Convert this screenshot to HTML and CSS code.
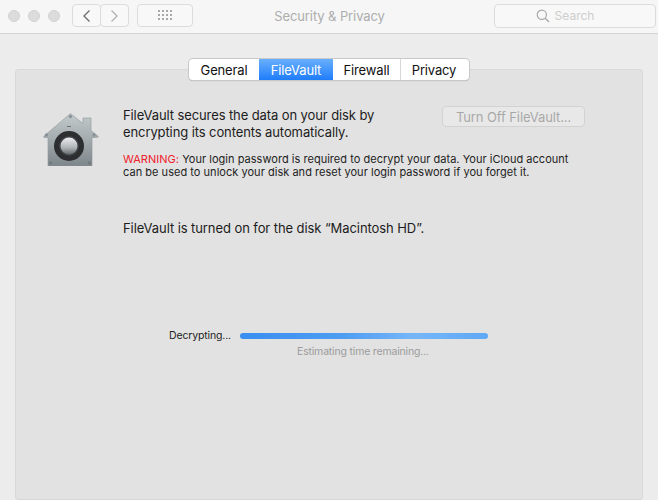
FILE: index.html
```html
<!DOCTYPE html>
<html lang="en">
<head>
<meta charset="utf-8">
<title>Security &amp; Privacy</title>
<link rel="stylesheet" href="styles.css">
</head>
<body>
<header class="toolbar">
  <div class="lights"><span class="light"></span><span class="light"></span><span class="light"></span></div>
  <div class="nav">
    <button class="nav-btn nav-back"><svg width="9" height="14" viewBox="0 0 9 14"><path d="M7.500 1.500 2 7l5.500 5.500" fill="none" stroke="#6f6f6f" stroke-width="1.400"/></svg></button>
    <button class="nav-btn nav-fwd"><svg width="9" height="14" viewBox="0 0 9 14"><path d="M1.500 1.500 7 7l-5.500 5.500" fill="none" stroke="#b4b4b4" stroke-width="1.400"/></svg></button>
  </div>
  <button class="grid-btn"><svg width="15" height="11" viewBox="0 0 15 11" fill="#a8a8a8"><rect x="0" y="0" width="2" height="2"/><rect x="4" y="0" width="2" height="2"/><rect x="8" y="0" width="2" height="2"/><rect x="12" y="0" width="2" height="2"/><rect x="0" y="4" width="2" height="2"/><rect x="4" y="4" width="2" height="2"/><rect x="8" y="4" width="2" height="2"/><rect x="12" y="4" width="2" height="2"/><rect x="0" y="8" width="2" height="2"/><rect x="4" y="8" width="2" height="2"/><rect x="8" y="8" width="2" height="2"/><rect x="12" y="8" width="2" height="2"/></svg></button>
  <div class="title">Security &amp; Privacy</div>
  <div class="search"><svg width="14" height="14" viewBox="0 0 14 14"><circle cx="5.800" cy="5.800" r="4.600" fill="none" stroke="#a9a9a9" stroke-width="1.200"/><path d="M9.200 9.200 13 13" stroke="#a9a9a9" stroke-width="1.400"/></svg><span>Search</span></div>
</header>
<main class="content">
  <nav class="tabs">
    <span class="tab tab-general">General</span>
    <span class="tab tab-active">FileVault</span>
    <span class="tab tab-firewall">Firewall</span>
    <span class="tab tab-sep">Privacy</span>
  </nav>
  <section class="panel">
    <div class="top">
      <svg class="house" width="56" height="53" viewBox="0 0 56 53">
        <defs>
          <linearGradient id="body" x1="0" y1="0" x2="0" y2="1"><stop offset="0" stop-color="#c3cacc"/><stop offset="0.5" stop-color="#a4abae"/><stop offset="1" stop-color="#7c858a"/></linearGradient>
          <linearGradient id="knob" x1="0" y1="0" x2="0" y2="1"><stop offset="0" stop-color="#eceeef"/><stop offset="0.6" stop-color="#aeb3b5"/><stop offset="1" stop-color="#65696b"/></linearGradient>
        </defs>
        <path d="M27.500 0.500 40 10.500V5h8v12.500l7.500 6-1.500 1h-5V53H5V24.500H1l-.500-1z" fill="url(#body)" stroke="#8f979b" stroke-width="0.600"/>
        <circle cx="26" cy="33" r="15" fill="#2c2e2f"/>
        <circle cx="26" cy="33" r="10" fill="#414445"/>
        <circle cx="26" cy="33" r="8.500" fill="url(#knob)"/>
        <rect x="24" y="13" width="4" height="1" fill="#6c7377"/>
        <circle cx="27.500" cy="3.500" r="1.700" fill="#8a9397"/>
        <circle cx="3.500" cy="22" r="1.700" fill="#8a9397"/>
        <circle cx="51" cy="22" r="1.700" fill="#8a9397"/>
        <circle cx="7.500" cy="50" r="1.400" fill="#6f777b"/>
        <circle cx="46.500" cy="50" r="1.400" fill="#6f777b"/>
      </svg>
      <div class="info">
        <div class="intro">
          <p class="lead">FileVault secures the data on your disk by<br>encrypting its contents automatically.</p>
          <button class="turn-off">Turn Off FileVault...</button>
        </div>
        <p class="warning"><span class="warn-label">WARNING:</span> Your login password is required to decrypt your data. Your iCloud account<br>can be used to unlock your disk and reset your login password if you forget it.</p>
        <p class="status">FileVault is turned on for the disk “Macintosh HD”.</p>
      </div>
    </div>
    <div class="progress-row">
      <span class="progress-label">Decrypting...</span>
      <div class="bar"></div>
    </div>
    <p class="estimate">Estimating time remaining...</p>
  </section>
</main>
</body>
</html>
```
FILE: styles.css
```css
* { box-sizing: border-box; }
html, body { margin: 0; height: 100%; }
body {
  width: 658px;
  height: 500px;
  overflow: hidden;
  background: #ececec;
  font-family: Inter, "Liberation Sans", sans-serif;
  color: #1a1a1a;
  display: flex;
  flex-direction: column;
}
p { margin: 0; }
button { font-family: inherit; padding: 0; margin: 0; background: transparent; }

.toolbar {
  height: 34px;
  flex: none;
  background: #f6f6f6;
  border-bottom: 1px solid #d4d4d4;
  display: flex;
  align-items: center;
  padding: 0 2px 2px 8px;
}
.lights { display: flex; gap: 8px; width: 64px; flex: none; }
.light { width: 12px; height: 12px; border-radius: 50%; background: #dcdcdc; border: 1px solid #d2d2d2; }
.nav { display: flex; }
.nav-btn {
  width: 29px;
  height: 23px;
  border: 1px solid #dcdcdc;
  border-radius: 4px;
  background: #f8f8f8;
  display: flex;
  align-items: center;
  justify-content: center;
}
.nav-fwd { margin-left: -1px; }
.grid-btn {
  width: 56px;
  height: 23px;
  margin-left: 8px;
  border: 1px solid #dcdcdc;
  border-radius: 4px;
  background: #f8f8f8;
  display: flex;
  align-items: center;
  justify-content: center;
}
.title { width: 273px; flex: none; text-align: center; font-size: 13px; color: #adadad; letter-spacing: -0.1px; }
.search {
  width: 162px;
  height: 24px;
  margin-left: auto;
  padding-right: 20px;
  border: 1px solid #dcdcdc;
  border-radius: 4px;
  background: #f8f8f8;
  display: flex;
  align-items: center;
  justify-content: center;
  gap: 5px;
  font-size: 12px;
  color: #cdcdcd;
}

.content { flex: 1; display: flex; flex-direction: column; padding: 25px 15px 0; min-height: 0; }
.tabs {
  align-self: center;
  height: 21px;
  display: flex;
  background: #fff;
  border-radius: 4px;
  box-shadow: 0 0 0 1px #c9c9c9, 0 1px 1px #a0a0a0;
  font-size: 13px;
  color: #111;
  position: relative;
  z-index: 1;
  margin-bottom: -11px;
}
.tab { display: flex; align-items: center; justify-content: center; width: 70px; height: 21px; letter-spacing: -0.15px; }
.tab-general { border-radius: 4px 0 0 4px; }
.tab-active { width: 74px; background: linear-gradient(#69b0fd, #1f7dfa); color: #fff; }
.tab-firewall { width: 67px; }
.tab-sep { border-left: 1px solid #d8d8d8; width: 69px; border-radius: 0 4px 4px 0; padding-right: 2px; }

.panel {
  flex: 1;
  background: #e2e2e2;
  border: 1px solid #d9d9d9;
  border-bottom-color: #d6d6d6;
  border-radius: 4px;
  padding-top: 34px;
}
.top { display: flex; }
.house { margin: 9px 0 0 27px; flex: none; }
.info { margin-left: 24px; }
.intro { display: flex; align-items: flex-start; }
.lead { width: 319px; font-size: 13px; line-height: 17px; letter-spacing: -0.1px; color: #1c1c1c; margin-top: 3px; }
.turn-off {
  width: 143px;
  height: 21px;
  margin-top: 2px;
  border: 1px solid #d2d2d2;
  border-radius: 4px;
  background: #e8e8e8;
  color: #a8a8a8;
  font-size: 13px;
  letter-spacing: -0.1px;
}
.warning { font-size: 11px; line-height: 13px; margin-top: 12px; letter-spacing: 0.03px; color: #222; white-space: nowrap; }
.warn-label { color: #f0202a; }
.status { font-size: 13px; line-height: 18px; margin-top: 40px; letter-spacing: -0.08px; color: #1c1c1c; }

.progress-row { display: flex; align-items: center; margin-top: 92px; padding-left: 153px; }
.progress-label { width: 71px; flex: none; font-size: 10.500px; letter-spacing: -0.15px; color: #222; line-height: 14px; }
.bar {
  width: 248px;
  height: 6px;
  border-radius: 3px;
  background: linear-gradient(90deg, #3a8ef0 0%, #4c9cf2 40%, #76b6f8 70%, #5ea8f5 100%);
}
.estimate { font-size: 10.500px; line-height: 14px; margin: 2px 0 0 281px; color: #9c9c9c; letter-spacing: -0.18px; }
```
